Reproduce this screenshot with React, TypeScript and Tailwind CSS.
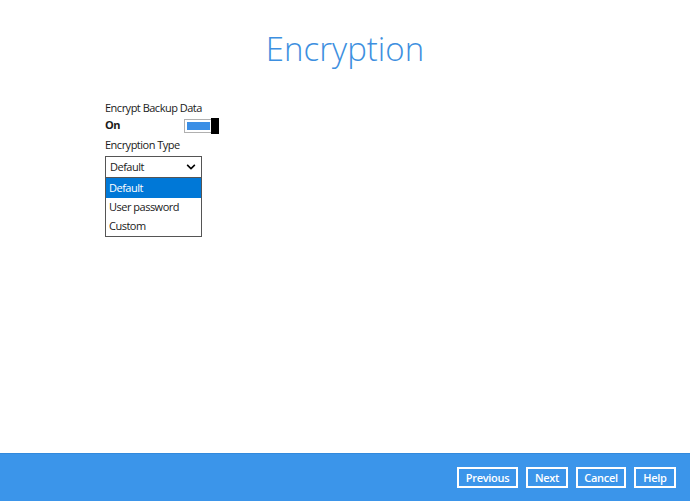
import { FaChevronDown } from "react-icons/fa";

const OPTIONS = ["Default", "User password", "Custom"];
const BUTTONS: [string, string][] = [
  ["Previous", "w-[61px]"],
  ["Next", "w-[42px]"],
  ["Cancel", "w-[50px]"],
  ["Help", "w-[42px]"],
];

export default function App() {
  return (
    <div className="w-[690px] h-[501px] flex flex-col bg-white text-[#1a1a1a]" style={{ fontFamily: '"Open Sans", "Noto Sans", sans-serif' }}>
      <div className="flex-1 flex flex-col">
        <h1 className="mt-[27px] text-center text-[33px] leading-[44px] font-light text-[#3d8fe0]">Encryption</h1>

        <div className="mt-[28px] ml-[105px] flex flex-col text-[11px] tracking-[-0.5px]">
          <p className="leading-[16px] mt-[1px]">Encrypt Backup Data</p>
          <div className="flex items-center mt-[1px] h-[17px]">
            <span className="w-[79px] font-bold">On</span>
            {/* toggle */}
            <div className="relative w-[35px] h-[16px] flex items-center">
              <div className="w-[29px] h-[14px] border border-[#b0b0b0] bg-white flex items-center px-[2px]">
                <div className="w-[24px] h-[8px] bg-[#3b8fe6]" />
              </div>
              <div className="absolute right-0 top-0 w-[8px] h-[16px] bg-black" />
            </div>
          </div>
          <p className="mt-[3px] leading-[16px]">Encryption Type</p>
          <div className="mt-[3px] w-[97px]">
            <div className="h-[22px] border border-[#555] flex items-center justify-between pl-[4px] pr-[5px]">
              <span>Default</span>
              <FaChevronDown className="text-[10px] text-black" />
            </div>
            <ul className="border border-t-0 border-[#555] flex flex-col">
              {OPTIONS.map((o, i) => (
                <li key={o} className={i === 0 ? "h-[20px] flex items-center pl-[3px] bg-[#0078d7] text-white" : "h-[19px] flex items-center pl-[3px]"}>
                  {o}
                </li>
              ))}
            </ul>
          </div>
        </div>
      </div>

      <div className="h-[48px] bg-[#3b95ea] border-t border-[#3289dc] flex items-center justify-end gap-[8px] pr-[14px] pb-[1px]">
        {BUTTONS.map(([b, w]) => (
          <button key={b} className={`${w} h-[21px] border-2 border-white text-white text-[11px] font-semibold leading-none tracking-[-0.3px] flex items-center justify-center`}>
            {b}
          </button>
        ))}
      </div>
    </div>
  );
}
